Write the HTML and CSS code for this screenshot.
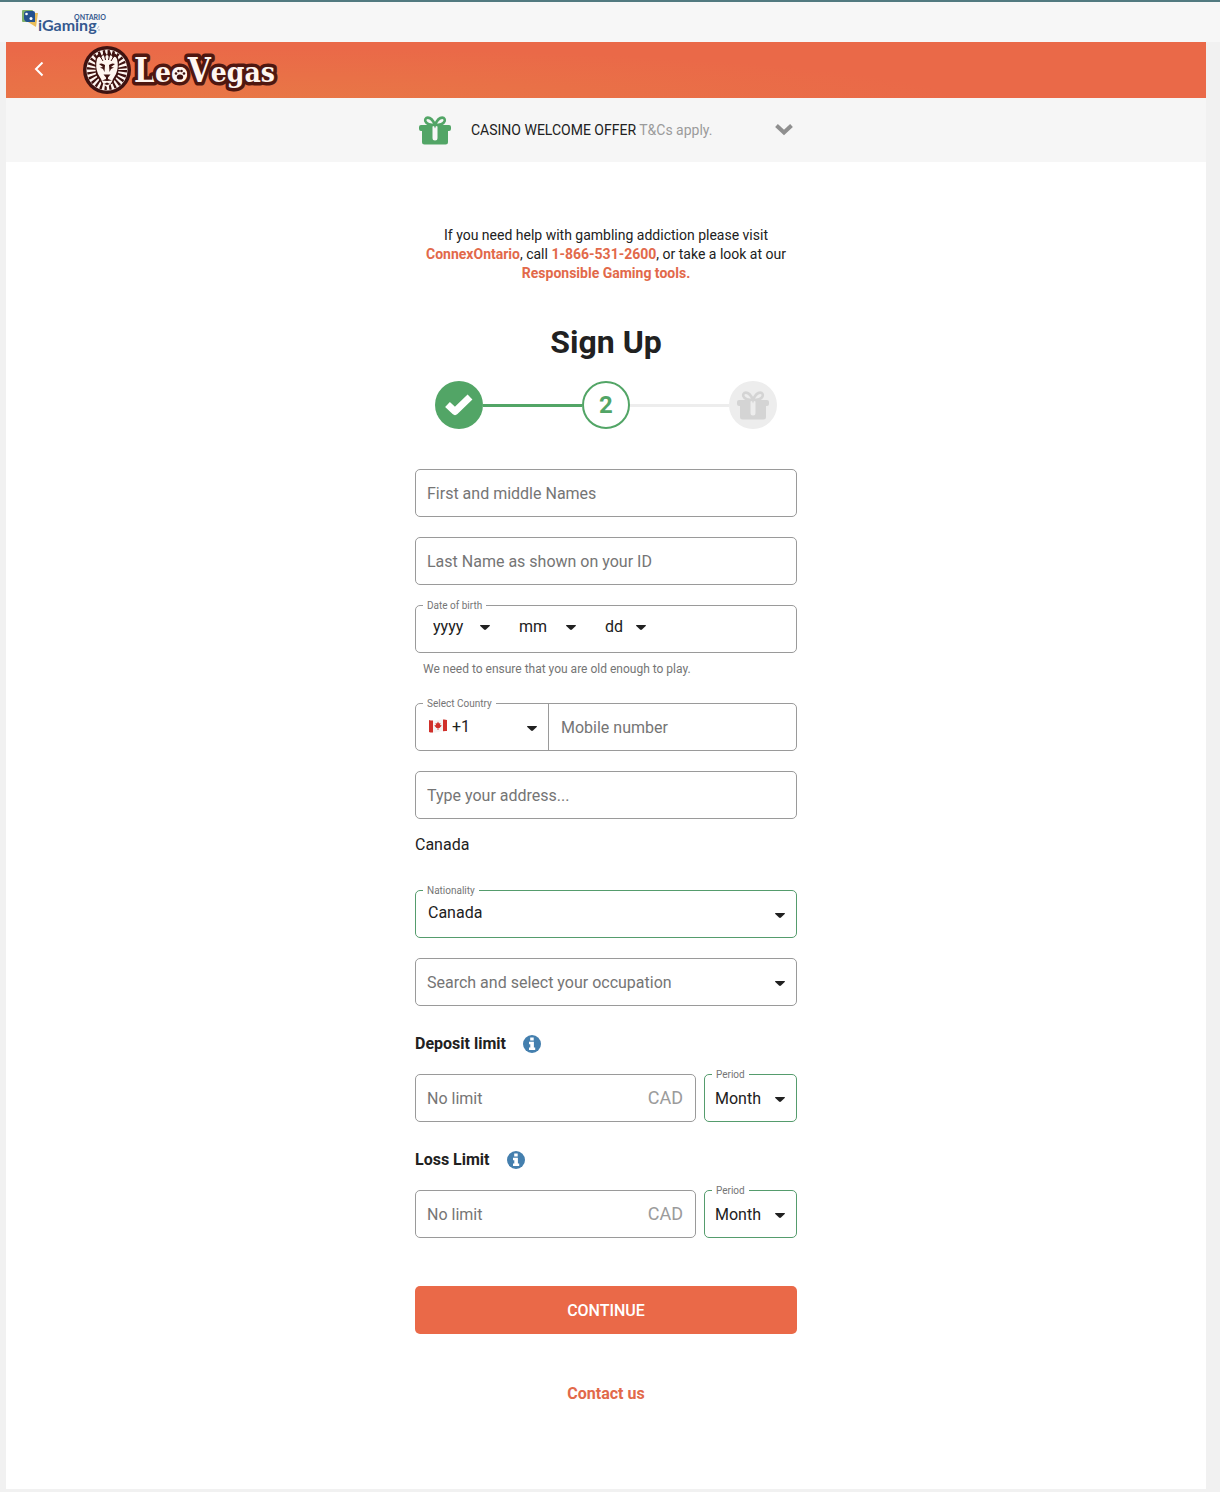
FILE: index.html
```html
<!DOCTYPE html>
<html lang="en">
  <head>
    <meta charset="UTF-8" />
    <meta name="viewport" content="width=device-width, initial-scale=1.0" />
    <title>LeoVegas - Sign Up</title>
    <link rel="stylesheet" href="styles.css">
  </head>
  <body>
    <!-- shared symbols -->
    <svg class="symbols" aria-hidden="true">
      <symbol id="gift" viewBox="0 0 32 29">
        <path fill="none" stroke="currentColor" stroke-width="2.6" d="M16 9 C14 4 11 1.6 8.800 1.600 C6.500 1.600 5.800 3.600 6.400 5.200 C7.500 8 12 9 16 9 C20 9 24.500 8 25.600 5.200 C26.200 3.600 25.500 1.600 23.200 1.600 C21 1.600 18 4 16 9 Z" />
        <path fill="currentColor" fill-rule="evenodd" d="M2 9 H30 Q32 9 32 11 V13 Q32 15 30 15 H29 V26 Q29 28.500 26.500 28.500 H5.500 Q3 28.500 3 26 V15 H2 Q0 15 0 13 V11 Q0 9 2 9 Z M15.500 9 Q13.500 9 13.500 11 V22 Q13.500 24.500 16 24.500 Q18.500 24.500 18.500 22 V11 Q18.500 9 16.500 9 Z" />
      </symbol>
      <symbol id="caret" viewBox="0 0 10 5">
        <path fill="currentColor" d="M.5 0 H9.500 Q10.300 .2 9.700 .9 L6 4.600 Q5 5.400 4 4.600 L.3 .9 Q-.3 .2 .5 0 Z" />
      </symbol>
      <symbol id="info" viewBox="0 0 18 18">
        <circle cx="9" cy="9" r="9" fill="currentColor" />
        <path fill="#fff" d="M7.200 2.600 H10.700 V5.600 H7.200 Z M6 6.700 H10.900 V12.400 H12.200 V15 H6 V12.400 H7.300 V9.200 H6 Z" />
      </symbol>
    </svg>

    <div class="topbar">
      <svg class="igaming-logo" viewBox="0 0 90 30" role="img" aria-label="iGaming Ontario">
        <path fill="#e9bd5a" d="M8 5 H16 L14 19 L6 14 Z" />
        <rect x="0" y="2" width="11" height="12" rx="1" fill="#7fb069" />
        <path fill="#24528f" d="M5 3 H11 Q13 3 13 5 V14 H5 Q2 13 2 10 V6 Q2 3 5 3 Z" />
        <circle cx="4.500" cy="6" r="1.300" fill="#fff" />
        <circle cx="9" cy="10.500" r="1.500" fill="#fff" />
        <text class="igaming-name" x="16" y="23">iGaming</text>
        <text class="igaming-region" x="52" y="12">ONTARIO</text>
        <path d="M75 21 L77 18 M76 22 H78" stroke="#8fa3bf" stroke-width=".7" />
      </svg>
    </div>

    <div class="page">
      <header class="header">
        <a href="#" class="back" aria-label="Back">
          <svg width="10" height="16" viewBox="0 0 10 16">
            <path d="M8.500 .5 L2 7 L8.500 13.500" fill="none" stroke="#fff" stroke-width="2" />
          </svg>
        </a>
        <a href="#" class="logo" aria-label="LeoVegas">
          <svg width="200" height="50" viewBox="0 0 200 50">
            <circle cx="25" cy="25" r="24" fill="#3f1210" />
            <circle cx="25" cy="25" r="20.500" fill="#fff6f0" />
            <circle cx="25" cy="25" r="15.500" fill="none" stroke="#3f1210" stroke-width="9" stroke-dasharray="2 2.060" />
            <path fill="#3f1210" d="M13 17 Q14 9 18 8 L20 11 L22 6 L25 10 L28 6 L30 11 L32 8 Q36 9 37 17 L36 30 L30 39 H20 L14 30 Z" />
            <path fill="#fff6f0" d="M15 14 Q17 10 19 13 Q21 8 23 12 Q25 8 27 12 Q29 8 31 13 Q33 10 35 14 Q37 22 34 29 L31 34 Q29 40 25 42 Q21 40 19 34 L16 29 Q13 22 15 14 Z" />
            <path fill="#3f1210" d="M17 19 Q20 17.500 23 20 L22.500 27 L21 24 L18 22.500 L21 22 Z M33 19 Q30 17.500 27 20 L27.500 27 L29 24 L32 22.500 L29 22 Z M21.500 29.500 H28.500 L26 32.500 V34 L30 35.500 L25 36 L20 35.500 L24 34 V32.500 Z M22 39 L25 37.500 L28 39 L25 40 Z" />
            <path fill="none" stroke="#3f1210" d="M18 11 L21 16 M22.500 10 L23.500 15 M27.500 10 L26.500 15 M32 11 L29 16" />
            <text class="logo-name" x="52" y="37"><tspan class="logo-cap">L</tspan>eo<tspan class="logo-cap">V</tspan>egas</text>
            <g fill="#3f1210">
              <circle cx="98" cy="29" r="7" fill="#fff6f0" />
              <ellipse cx="98" cy="32" rx="3.200" ry="2.600" />
              <circle cx="94" cy="28.500" r="1.300" />
              <circle cx="96.500" cy="26" r="1.300" />
              <circle cx="99.500" cy="26" r="1.300" />
              <circle cx="102" cy="28.500" r="1.300" />
            </g>
          </svg>
        </a>
      </header>

      <button type="button" class="offer">
        <span class="offer-inner">
          <svg class="offer-gift" width="32" height="29"><use href="#gift" /></svg>
          <span class="offer-text">CASINO WELCOME OFFER <span class="offer-terms">T&amp;Cs apply.</span></span>
          <svg width="18" height="12" viewBox="0 0 18 12">
            <path d="M1.500 1.500 L9 8.500 L16.500 1.500" fill="none" stroke="#8f8f8f" stroke-width="4" />
          </svg>
        </span>
      </button>

      <main class="content">
        <p class="help">
          If you need help with gambling addiction please visit
          <a href="#">ConnexOntario</a>, call <a href="#">1-866-531-2600</a>, or take a look at our
          <a href="#">Responsible Gaming tools</a><b>.</b>
        </p>

        <h1>Sign Up</h1>

        <div class="steps">
          <span class="step done">
            <svg width="30" height="24" viewBox="0 0 30 24">
              <path d="M3.500 11.500 L11 18.500 L26 4" fill="none" stroke="#fff" stroke-width="7" stroke-linejoin="round" />
            </svg>
          </span>
          <span class="line line-done"></span>
          <span class="step current">2</span>
          <span class="line"></span>
          <span class="step next">
            <svg width="32" height="29"><use href="#gift" /></svg>
          </span>
        </div>

        <form>
          <div class="field">
            <input type="text" aria-label="First and middle Names" placeholder="First and middle Names" />
          </div>

          <div class="field">
            <input type="text" aria-label="Last Name as shown on your ID" placeholder="Last Name as shown on your ID" />
          </div>

          <div class="field birth" role="group" aria-labelledby="birthLabel">
            <span class="float-label" id="birthLabel">Date of birth</span>
            <span class="select">
              <select aria-label="Year"><option>yyyy</option></select>
              <svg class="caret"><use href="#caret" /></svg>
            </span>
            <span class="select">
              <select aria-label="Month"><option>mm</option></select>
              <svg class="caret"><use href="#caret" /></svg>
            </span>
            <span class="select day">
              <select aria-label="Day"><option>dd</option></select>
              <svg class="caret"><use href="#caret" /></svg>
            </span>
          </div>
          <p class="hint">We need to ensure that you are old enough to play.</p>

          <div class="field phone">
            <label class="float-label" for="country">Select Country</label>
            <span class="select country">
              <svg class="flag" width="18" height="14" viewBox="0 0 18 14">
                <path fill="#f4f4f4" d="M0 1 Q5 2 9 1 T18 1 V12 Q13 12 9 13 T0 13 Z" />
                <path fill="#d0302a" d="M0 1 Q2 1.700 4 1.500 V13.500 Q2 13.700 0 13 Z M14 .5 Q16 .2 18 1 V12 Q16 11.700 14 12.200 Z" />
                <path fill="#d0302a" d="M9 2.500 L10 4.500 L11.500 4 L11 6 L12.800 6.500 L10.500 9 H9.400 V11 H8.600 V9 H7.500 L5.200 6.500 L7 6 L6.500 4 L8 4.500 Z" />
              </svg>
              <select id="country"><option>+1</option></select>
              <svg class="caret"><use href="#caret" /></svg>
            </span>
            <input type="tel" aria-label="Mobile number" placeholder="Mobile number" />
          </div>

          <div class="field">
            <input type="text" aria-label="Address" placeholder="Type your address..." />
          </div>
          <p class="address-country">Canada</p>

          <div class="field valid nationality">
            <label class="float-label" for="nationality">Nationality</label>
            <span class="select">
              <select id="nationality"><option>Canada</option></select>
              <svg class="caret"><use href="#caret" /></svg>
            </span>
          </div>

          <div class="field">
            <input type="text" aria-label="Occupation" placeholder="Search and select your occupation" />
            <svg class="caret"><use href="#caret" /></svg>
          </div>

          <div class="limit-title">
            <label for="deposit">Deposit limit</label>
            <svg width="18" height="18"><use href="#info" /></svg>
          </div>
          <div class="limit">
            <div class="field amount">
              <input type="text" id="deposit" placeholder="No limit" />
              <span class="currency">CAD</span>
            </div>
            <div class="field valid period">
              <label class="float-label" for="depositPeriod">Period</label>
              <span class="select">
                <select id="depositPeriod"><option>Month</option></select>
                <svg class="caret"><use href="#caret" /></svg>
              </span>
            </div>
          </div>

          <div class="limit-title">
            <label for="loss">Loss Limit</label>
            <svg width="18" height="18"><use href="#info" /></svg>
          </div>
          <div class="limit">
            <div class="field amount">
              <input type="text" id="loss" placeholder="No limit" />
              <span class="currency">CAD</span>
            </div>
            <div class="field valid period">
              <label class="float-label" for="lossPeriod">Period</label>
              <span class="select">
                <select id="lossPeriod"><option>Month</option></select>
                <svg class="caret"><use href="#caret" /></svg>
              </span>
            </div>
          </div>

          <button type="submit" class="continue">CONTINUE</button>
        </form>

        <a href="#" class="contact">Contact us</a>
      </main>
    </div>
  </body>
</html>
```

FILE: styles.css
```css
* {
  box-sizing: border-box;
}

body {
  font-family: Roboto, "Liberation Sans", sans-serif;
  font-size: 16px;
  line-height: 20px;
  background-color: #f1f1f1;
  color: #212121;
  margin: 0;
}

a {
  color: #e2694a;
  font-weight: bold;
  text-decoration: none;
}

p {
  margin: 0;
}

svg {
  display: block;
  flex: none;
}

.symbols {
  position: absolute;
  width: 0;
  height: 0;
}

.topbar {
  height: 42px;
  padding: 6px 22px;
  border-top: 2px solid #527a80;
  background-color: #f7f7f7;
}

.igaming-logo {
  width: 90px;
  height: 30px;
}

.igaming-name {
  font: bold 16px Lato, sans-serif;
  fill: #35598f;
}

.igaming-region {
  font: bold 7px Lato, sans-serif;
  fill: #35598f;
}

.page {
  margin: 0 14px 3px 6px;
  background-color: #fff;
}

.header {
  display: flex;
  align-items: center;
  height: 56px;
  padding-left: 28px;
  background: radial-gradient(ellipse 60% 100% at 20% 110%, #e87846, #ea6948);
}

.back {
  margin-right: 38px;
}

.logo-name {
  font: bold 28px "DejaVu Serif Condensed", "DejaVu Serif", serif;
  fill: #fff6f0;
  stroke: #4f1710;
  stroke-width: 7px;
  stroke-linejoin: round;
  paint-order: stroke;
}

.logo-cap {
  font-size: 33px;
}

.offer {
  display: block;
  width: 100%;
  height: 64px;
  padding: 0;
  border: 0;
  background-color: #f6f6f6;
  color: #212121;
  font: 14px Roboto, "Liberation Sans", sans-serif;
  text-align: left;
}

.offer-inner {
  display: flex;
  align-items: center;
  gap: 20px;
  max-width: 374px;
  margin: 0 auto;
}

.offer-gift {
  color: #52a566;
}

.offer-text {
  flex: 1;
}

.offer-terms {
  color: #9b9b9b;
}

.content {
  max-width: 382px;
  margin: 0 auto;
  padding: 64px 0 85px;
  text-align: center;
}

.help {
  font-size: 14px;
  line-height: 19px;
}

.help b {
  color: #e2694a;
}

h1 {
  margin: 40px 0 20px;
  font-size: 32px;
  line-height: 38px;
}

.steps {
  display: flex;
  align-items: center;
  margin: 0 20px 40px;
}

.step {
  display: flex;
  align-items: center;
  justify-content: center;
  width: 48px;
  height: 48px;
  border-radius: 50%;
}

.done {
  background-color: #52a566;
}

.current {
  border: 2px solid #52a566;
  color: #52a566;
  font-size: 24px;
  font-weight: bold;
}

.next {
  background-color: #ededed;
  color: #d4d4d4;
}

.line {
  flex: 1;
  height: 3px;
  background-color: #ededed;
}

.line-done {
  background-color: #52a566;
}

form {
  text-align: left;
}

.field {
  position: relative;
  display: flex;
  align-items: center;
  height: 48px;
  margin-bottom: 20px;
  border: 1px solid #9a9a9a;
  border-radius: 5px;
}

.valid {
  border-color: #559c6d;
}

input,
select {
  width: 100%;
  height: 100%;
  border: 0;
  padding: 0 11px;
  background: none;
  color: #212121;
  font: 16px Roboto, "Liberation Sans", sans-serif;
  outline: none;
}

input::placeholder {
  color: #757575;
  opacity: 1;
}

select {
  appearance: none;
}

.select {
  position: relative;
  display: flex;
  align-items: center;
  width: 100%;
  height: 100%;
}

.caret {
  position: absolute;
  right: 11px;
  top: 22px;
  width: 10px;
  height: 5px;
  pointer-events: none;
}

.float-label {
  position: absolute;
  top: -6px;
  left: 7px;
  z-index: 1;
  padding: 0 4px;
  background-color: #fff;
  color: #757575;
  font-size: 10px;
  line-height: 12px;
}

.birth {
  gap: 29px;
  padding: 0 17px 6px;
}

.birth .select {
  width: 57px;
}

.birth .day {
  width: 41px;
}

.birth select {
  padding: 0;
}

.birth .caret {
  right: 0;
  top: 19px;
}

.hint {
  margin: -12px 8px 26px;
  color: #757575;
  font-size: 12px;
  line-height: 16px;
}

.country {
  width: 133px;
  flex: none;
  border-right: 1px solid #9a9a9a;
}

.country select {
  padding: 0 0 2px 36px;
}

.phone input {
  padding-left: 12px;
}

.flag {
  position: absolute;
  left: 13px;
  top: 15px;
}

.address-country {
  margin: -4px 0 35px;
}

.nationality select {
  padding: 0 12px 4px;
}

.limit-title {
  display: flex;
  align-items: center;
  gap: 17px;
  margin: 28px 0 20px;
  font-weight: bold;
}

.limit-title svg {
  color: #447fae;
}

.limit {
  display: flex;
  gap: 8px;
}

.amount {
  flex: 1;
  margin-bottom: 0;
}

.currency {
  padding-right: 12px;
  color: #9b9b9b;
  font-size: 18px;
}

.period {
  width: 93px;
  margin-bottom: 0;
}

.period select {
  padding: 0 10px;
}

.continue {
  width: 100%;
  height: 48px;
  margin: 48px 0 50px;
  border: 0;
  border-radius: 5px;
  background-color: #ea6948;
  color: #fff;
  font: 500 16px Roboto, "Liberation Sans", sans-serif;
}

.contact {
  display: block;
}
```
